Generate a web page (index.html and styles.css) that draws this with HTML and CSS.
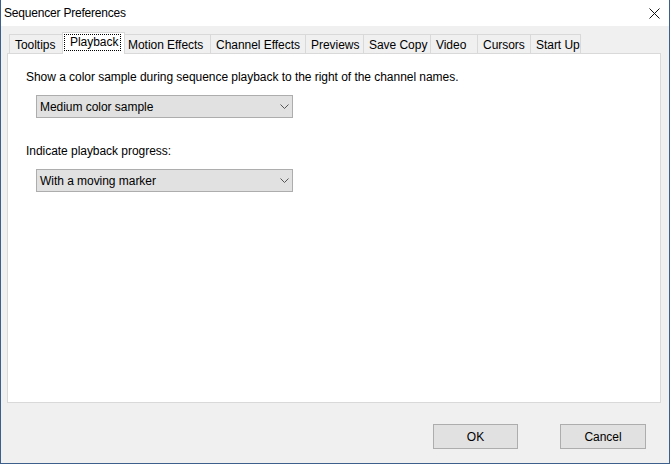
FILE: index.html
```html
<!DOCTYPE html>
<html lang="en">
<head>
    <meta charset="UTF-8">
    <title>Sequencer Preferences</title>
    <link rel="stylesheet" href="styles.css">
</head>
<body>

    <!-- Dialog window -->
    <div class="window">
        <div class="titlebar">
            <span class="title">Sequencer Preferences</span>
            <svg class="close" width="11" height="11" viewBox="0 0 11 11">
                <path d="M0.5 0.5 L10.5 10.5 M10.5 0.5 L0.5 10.5" stroke="#111" stroke-width="1" fill="none"/>
            </svg>
        </div>

        <!-- Tab strip -->
        <div class="tabs">
            <div class="tab tab-tooltips">Tooltips</div>
            <div class="tab tab-playback selected"><span class="focus">Playback</span></div>
            <div class="tab tab-motion">Motion Effects</div>
            <div class="tab tab-channel">Channel Effects</div>
            <div class="tab tab-previews">Previews</div>
            <div class="tab tab-savecopy">Save Copy</div>
            <div class="tab tab-video">Video</div>
            <div class="tab tab-cursors">Cursors</div>
            <div class="tab tab-startup">Start Up</div>
        </div>

        <!-- Playback page -->
        <div class="panel">
            <p class="label">Show a color sample during sequence playback to the right of the channel names.</p>
            <div class="combo">
                <span>Medium color sample</span>
                <svg width="9" height="5" viewBox="0 0 9 5"><path d="M0.5 0.5 L4.5 4.5 L8.5 0.5" stroke="#555" fill="none"/></svg>
            </div>

            <p class="label label-gap">Indicate playback progress:</p>
            <div class="combo">
                <span>With a moving marker</span>
                <svg width="9" height="5" viewBox="0 0 9 5"><path d="M0.5 0.5 L4.5 4.5 L8.5 0.5" stroke="#555" fill="none"/></svg>
            </div>
        </div>

        <div class="buttons">
            <button class="btn">OK</button>
            <button class="btn btn-cancel">Cancel</button>
        </div>
    </div>

</body>
</html>
```

FILE: styles.css
```css
/* Dasar halaman */
body {
    margin: 0;
    font-family: "Liberation Sans", Arial, sans-serif;
    font-size: 12px;
    letter-spacing: -0.04px;
    color: #000;
    background: #f0f0f0;
}

/* Jendela dialog */
.window {
    width: 670px;
    height: 464px;
    box-sizing: border-box;
    border: 1px solid #3d5f8c;
    border-top: none;
    background: #f0f0f0;
    display: flex;
    flex-direction: column;
}

.titlebar {
    height: 26px;
    background: #fff;
    display: flex;
    align-items: center;
    justify-content: space-between;
    padding: 0 9px 0 3px;
}

.title {
    font-size: 12px;
    letter-spacing: -0.2px;
}

.close {
    margin-top: 1px;
}

/* Tab strip */
.tabs {
    display: flex;
    align-items: flex-end;
    height: 21px;
    margin-top: 6px;
    padding-left: 8px;
}

.tab {
    height: 19px;
    box-sizing: border-box;
    border: 1px solid #d9d9d9;
    border-bottom: none;
    background: #f0f0f0;
    margin-right: -1px;
    padding: 2px 0 0 5px;
    line-height: 16px;
    white-space: nowrap;
}

.tab-tooltips { width: 56px; }
.tab-playback { width: 59px; }
.tab-motion { width: 89px; }
.tab-channel { width: 96px; }
.tab-previews { width: 59px; }
.tab-savecopy { width: 68px; }
.tab-video { width: 48px; }
.tab-cursors { width: 54px; }
.tab-startup { width: 51px; }

.tab.selected {
    position: relative;
    z-index: 1;
    width: 63px;
    height: 22px;
    margin: 0 -3px -1px -2px;
    padding: 1px 0 0 1px;
    background: #fff;
}

.focus {
    display: block;
    width: 57px;
    height: 17px;
    box-sizing: border-box;
    border: 1px dotted #000;
    padding: 0 0 0 5px;
    line-height: 15px;
}

/* Panel isi */
.panel {
    height: 350px;
    box-sizing: border-box;
    margin: 0 8px 0 6px;
    border: 1px solid #d9d9d9;
    background: #fff;
    padding: 15px 0 0 18px;
}

.label {
    margin: 0;
    line-height: 16px;
}

.label-gap {
    margin-top: 25px;
}

.combo {
    width: 257px;
    height: 23px;
    box-sizing: border-box;
    margin: 10px 0 0 10px;
    border: 1px solid #adadad;
    background: #e1e1e1;
    display: flex;
    align-items: center;
    justify-content: space-between;
    padding: 0 3px 0 3px;
}

/* Tombol */
.buttons {
    display: flex;
    justify-content: flex-end;
    gap: 42px;
    margin-top: 21px;
    padding-right: 23px;
}

.btn {
    width: 85px;
    height: 25px;
    border: 1px solid #adadad;
    background: #e1e1e1;
    font-family: inherit;
    font-size: 12px;
    letter-spacing: inherit;
    color: #000;
    padding: 0;
}

.btn-cancel {
    width: 86px;
}
```
